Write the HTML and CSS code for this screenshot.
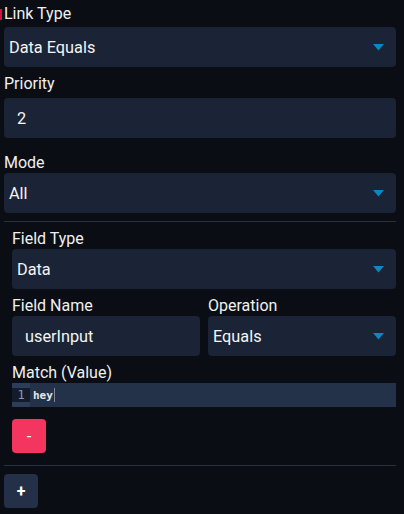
FILE: index.html
```html
<!DOCTYPE html>
<html>
<head>
<meta charset="utf-8">
<link rel="stylesheet" href="styles.css">
</head>
<body>
<div class="panel">
  <div class="field">
    <label class="lbl lbl-first">Link Type</label>
    <div class="select"><span>Data Equals</span><svg class="caret" width="11" height="7" viewBox="0 0 11 7"><polygon points="0,0 11,0 5.5,6.5" /></svg></div>
  </div>
  <div class="field">
    <label class="lbl">Priority</label>
    <div class="input">2</div>
  </div>
  <div class="field field-mode">
    <label class="lbl lbl-mode">Mode</label>
    <div class="select"><span>All</span><svg class="caret" width="11" height="7" viewBox="0 0 11 7"><polygon points="0,0 11,0 5.5,6.5" /></svg></div>
  </div>
  <hr class="sep">
  <div class="group">
    <div class="field-n">
      <label class="lbl lbl-n">Field Type</label>
      <div class="select"><span>Data</span><svg class="caret" width="11" height="7" viewBox="0 0 11 7"><polygon points="0,0 11,0 5.5,6.5" /></svg></div>
    </div>
    <div class="row">
      <div class="field-n col">
        <label class="lbl lbl-n">Field Name</label>
        <div class="input">userInput</div>
      </div>
      <div class="field-n col">
        <label class="lbl lbl-n">Operation</label>
        <div class="select"><span>Equals</span><svg class="caret" width="11" height="7" viewBox="0 0 11 7"><polygon points="0,0 11,0 5.5,6.5" /></svg></div>
      </div>
    </div>
    <div class="field-n">
      <label class="lbl lbl-n">Match (Value)</label>
      <div class="editor">
        <div class="gutter"><div class="ln">1</div></div>
        <div class="code"><span class="txt">hey</span><span class="cursor"></span></div>
      </div>
    </div>
    <button class="btn btn-remove">-</button>
  </div>
  <hr class="sep sep2">
  <button class="btn btn-add">+</button>
</div>
</body>
</html>
```

FILE: styles.css
```css
html, body {
  margin: 0;
  padding: 0;
  background: #0a0d14;
}
body {
  font-family: Roboto, "Liberation Sans", sans-serif;
  color: #f2f2f2;
  font-size: 16px;
}
.panel {
  width: 392px;
  padding: 0 8px 0 4px;
}
.lbl {
  display: block;
  line-height: 18px;
  font-size: 16px;
  color: #f0f0f0;
}
.field {
  margin-bottom: 8px;
}
.field .lbl {
  margin-bottom: 5px;
}
.field .lbl-first {
  padding-top: 5px;
  position: relative;
  margin-bottom: 4px;
}
.lbl-first::before {
  content: "";
  position: absolute;
  left: -4px;
  top: 9px;
  width: 2px;
  height: 11px;
  background: #d3123d;
}
.field-mode {
  margin-top: 16px;
}
.field .lbl-mode {
  margin-bottom: 1px;
}
.select, .input {
  height: 40px;
  box-sizing: border-box;
  background: #1a2436;
  border-radius: 4px;
  display: flex;
  align-items: center;
  font-size: 16.3px;
  color: #f4f4f4;
}
.select {
  padding: 0 12px 0 5px;
  justify-content: space-between;
}
.input {
  padding: 0 13px;
}
.caret {
  fill: #0b86c6;
  display: block;
}
.sep {
  border: 0;
  height: 1px;
  background: #283142;
  margin: 8px 0 0 0;
}
.group {
  padding: 8px 0 12px 8px;
}
.field-n {
  margin-bottom: 8px;
}
.field-n .lbl {
  margin-bottom: 1px;
}
.row {
  display: flex;
  gap: 8px;
}
.col {
  flex: 1;
}
.editor {
  display: flex;
  height: 24px;
  background: #243249;
}
.gutter {
  width: 18px;
  background: #2c3d5a;
  display: flex;
  align-items: center;
}
.ln {
  width: 18px;
  height: 14px;
  background: #141c2b;
  font-family: "DejaVu Sans Mono", monospace;
  font-size: 12px;
  line-height: 14px;
  text-align: center;
  color: #8a9ab3;
}
.code {
  display: flex;
  align-items: center;
  padding-left: 3px;
}
.txt {
  font-family: "DejaVu Sans Mono", monospace;
  font-size: 11px;
  font-weight: bold;
  color: #e6e6e6;
}
.cursor {
  display: inline-block;
  width: 1px;
  height: 14px;
  background: #7d8798;
  margin-left: 1px;
}
.btn {
  width: 34px;
  height: 34px;
  border: 0;
  border-radius: 4px;
  color: #fff;
  font-family: Roboto, "Liberation Sans", sans-serif;
  font-size: 16px;
  padding: 0;
  display: block;
}
.btn-remove {
  background: #f43560;
  margin-top: 12px;
  font-weight: normal;
}
.sep2 {
  margin-top: 0;
}
.btn-add {
  background: #233048;
  margin-top: 8px;
  font-weight: bold;
}
```
